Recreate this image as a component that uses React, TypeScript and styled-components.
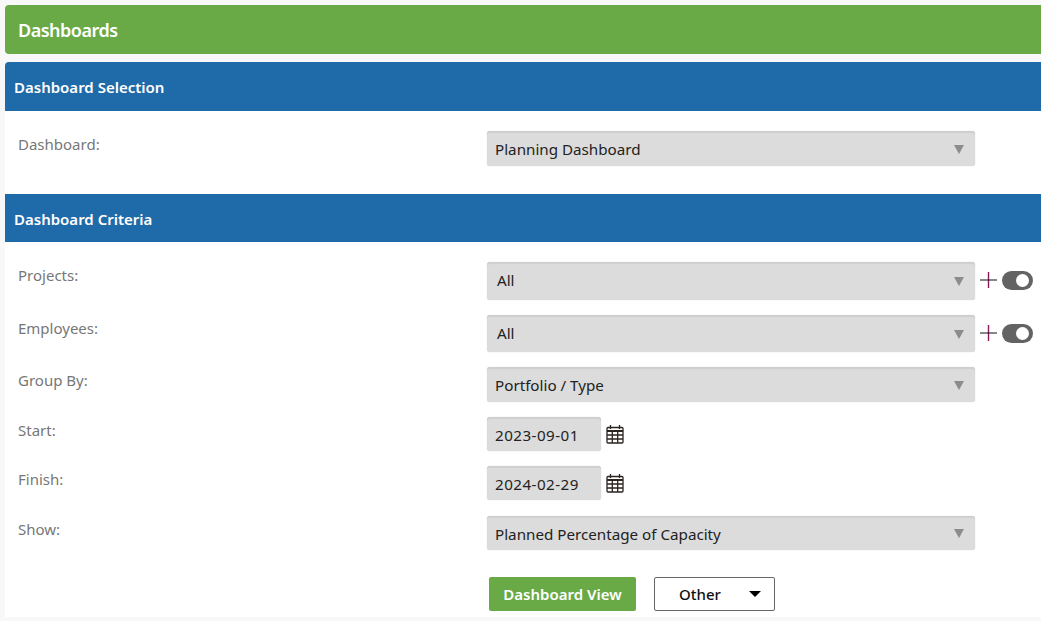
import styled, { createGlobalStyle } from 'styled-components';

const GlobalStyle = createGlobalStyle`
  html, body {
    margin: 0;
    padding: 0;
    height: 100%;
    overflow: hidden;
    background: #f8f8f8;
    font-family: "Noto Sans", "Open Sans", sans-serif;
  }
`;

const Page = styled.div`
  padding: 5px 0 0 5px;
`;

const TitleBar = styled.div`
  height: 49px;
  display: flex;
  align-items: center;
  padding-left: 13px;
  background: #69aa46;
  border-radius: 4px 0 0 4px;
  color: #fff;
  font-size: 18px;
  font-weight: 600;
  letter-spacing: -0.5px;
`;

const SectionBar = styled.div`
  height: 48px;
  box-sizing: border-box;
  padding: 2px 0 0 9px;
  display: flex;
  align-items: center;
  background: #1f6aa8;
  color: #fff;
  font-size: 15px;
  font-weight: 600;
`;

const FirstSection = styled(SectionBar)`
  margin-top: 8px;
  height: 49px;
  padding-top: 0;
  border-radius: 4px 0 0 0;
`;

const Panel = styled.div<{ $height: number }>`
  height: ${props => props.$height}px;
  background: #fff;
  box-sizing: border-box;
  padding: 20px 0 0 13px;
`;

const Row = styled.div<{ $top?: number }>`
  display: grid;
  grid-template-columns: 469px auto;
  margin-top: ${props => props.$top ?? 0}px;
`;

const Label = styled.div`
  color: #777;
  font-size: 15px;
  line-height: 20px;
  padding-top: 3px;
`;

const Controls = styled.div`
  display: flex;
  align-items: center;
`;

const Select = styled.div<{ $height: number; $inset?: number; $raise?: number; $lower?: number }>`
  width: 488px;
  height: ${props => props.$height}px;
  box-sizing: border-box;
  position: relative;
  display: flex;
  align-items: center;
  padding: ${props => props.$lower ?? 0}px 0 ${props => props.$raise ?? 0}px ${props => props.$inset ?? 8}px;
  background: #dcdcdc;
  border-radius: 3px;
  box-shadow: inset 0 2px 1px #cfcfcf, 0 0 1px #c4c4c4;
  color: #222;
  font-size: 15.2px;

  &::after {
    content: '';
    position: absolute;
    right: 11px;
    top: 50%;
    margin-top: -4px;
    border-left: 5.5px solid transparent;
    border-right: 5.5px solid transparent;
    border-top: 9px solid #8c8c8c;
  }
`;

const DateInput = styled.div`
  width: 114px;
  height: 34px;
  box-sizing: border-box;
  display: flex;
  align-items: center;
  padding: 2px 0 0 8px;
  background: #dcdcdc;
  border-radius: 3px;
  box-shadow: inset 0 2px 1px #cfcfcf, 0 0 1px #c4c4c4;
  color: #222;
  font-size: 15.2px;
  letter-spacing: 0.45px;
`;

const PlusMark = styled.svg`
  margin-left: 5px;
  position: relative;
  top: -1px;
  flex: none;
`;

const Toggle = styled.div`
  width: 31px;
  height: 19px;
  margin-left: 5px;
  position: relative;
  top: -0.5px;
  background: #636363;
  border-radius: 10px;

  &::after {
    content: '';
    position: absolute;
    right: 4px;
    top: 3px;
    width: 13px;
    height: 13px;
    border-radius: 50%;
    background: #fff;
  }
`;

const CalendarIcon = styled.svg`
  margin-left: 5px;
  flex: none;
`;

const Actions = styled.div`
  display: flex;
  align-items: center;
  margin: 27px 0 0 471px;
`;

const PrimaryButton = styled.button`
  width: 147px;
  height: 34px;
  border: 0;
  border-radius: 2px;
  background: #69aa46;
  color: #fff;
  font: 600 15px "Noto Sans", "Open Sans", sans-serif;
  padding: 0;
`;

const MenuButton = styled.button`
  width: 121px;
  height: 34px;
  margin-left: 18px;
  border: 1px solid #666;
  border-radius: 2px;
  background: #fff;
  color: #111;
  font: 500 15px "Noto Sans", "Open Sans", sans-serif;
  padding: 0 13px 0 24px;
  display: flex;
  align-items: center;
  justify-content: space-between;

  &::after {
    content: '';
    border-left: 6px solid transparent;
    border-right: 6px solid transparent;
    border-top: 6px solid #000;
  }
`;

const Plus = () => (
  <PlusMark width="17" height="18" viewBox="0 0 17 18">
    <path d="M8.5 1v16" stroke="#8a1a5c" strokeWidth="1.4" />
    <path d="M0 9h17" stroke="#111" strokeWidth="1" />
  </PlusMark>
);

const Calendar = () => (
  <CalendarIcon width="18" height="20" viewBox="0 0 18 20" fill="none" stroke="#2b2320" strokeWidth="1.3">
    <rect x="1" y="3.5" width="16" height="15.5" rx="1" />
    <path d="M1 7h16" strokeWidth="2" />
    <path d="M1 11h16M1 15h16M6.3 7v12M11.7 7v12" />
    <path d="M4.5 1v4M13.5 1v4" />
  </CalendarIcon>
);

const App = () => (
  <>
    <GlobalStyle />
    <Page>
      <TitleBar>Dashboards</TitleBar>
      <FirstSection>Dashboard Selection</FirstSection>
      <Panel $height={83}>
        <Row>
          <Label>Dashboard:</Label>
          <Controls>
            <Select $height={35}>Planning Dashboard</Select>
          </Controls>
        </Row>
      </Panel>
      <SectionBar>Dashboard Criteria</SectionBar>
      <Panel $height={375}>
        <Row>
          <Label>Projects:</Label>
          <Controls>
            <Select $height={38} $inset={10} $raise={2}>All</Select>
            <Plus />
            <Toggle />
          </Controls>
        </Row>
        <Row $top={15}>
          <Label>Employees:</Label>
          <Controls>
            <Select $height={37} $inset={10} $raise={2}>All</Select>
            <Plus />
            <Toggle />
          </Controls>
        </Row>
        <Row $top={15}>
          <Label>Group By:</Label>
          <Controls>
            <Select $height={35}>Portfolio / Type</Select>
          </Controls>
        </Row>
        <Row $top={15}>
          <Label>Start:</Label>
          <Controls>
            <DateInput>2023-09-01</DateInput>
            <Calendar />
          </Controls>
        </Row>
        <Row $top={15}>
          <Label>Finish:</Label>
          <Controls>
            <DateInput>2024-02-29</DateInput>
            <Calendar />
          </Controls>
        </Row>
        <Row $top={16}>
          <Label>Show:</Label>
          <Controls>
            <Select $height={34} $lower={2}>Planned Percentage of Capacity</Select>
          </Controls>
        </Row>
        <Actions>
          <PrimaryButton>Dashboard View</PrimaryButton>
          <MenuButton>Other</MenuButton>
        </Actions>
      </Panel>
    </Page>
  </>
);

export default App;
